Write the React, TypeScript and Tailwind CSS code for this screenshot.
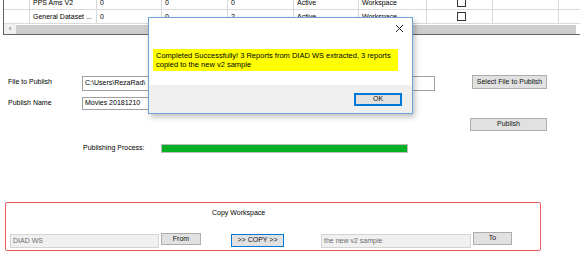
import React from "react";

const font = { fontFamily: '"Liberation Sans", Arial, sans-serif' };

const cols = [26, 67, 65, 66, 66, 65, 68, 66, 66, 60];

function Row({ cells }: { cells: (string | null)[] }) {
  return (
    <div className="flex h-[14px] border-b border-[#d9d9d9]">
      {cols.map((w, i) => (
        <div
          key={i}
          style={{ width: w }}
          className="shrink-0 border-r border-[#d9d9d9] pl-[3px] text-[7px] leading-[14px] text-black overflow-hidden whitespace-nowrap"
        >
          {cells[i] === "CB" ? (
            <div className="flex h-full items-center justify-center">
              <div className="h-[9px] w-[9px] border border-[#333] bg-white" />
            </div>
          ) : (
            cells[i]
          )}
        </div>
      ))}
    </div>
  );
}

function Btn({ children, className = "", focus = false }: { children: React.ReactNode; className?: string; focus?: boolean }) {
  return (
    <div
      className={`flex items-center justify-center bg-[#e1e1e1] text-[7px] font-normal text-[#111] ${
        focus ? "border border-[#0078d7]" : "border border-[#adadad]"
      } ${className}`}
    >
      {children}
    </div>
  );
}

export default function App() {
  return (
    <div style={font} className="relative h-[254px] w-[580px] overflow-hidden bg-white">
      {/* Grid */}
      <div className="ml-[3px] h-[35px] overflow-hidden border-l border-b border-[#646464]">
        <div className="-mt-[4px]">
          <Row cells={["", "PPS Ams V2", "0", "0", "0", "Active", "Workspace", "CB", ""]} />
          <Row cells={["", "General Dataset ...", "0", "0", "2", "Active", "Workspace", "CB", ""]} />
          <div className="flex h-[10px] items-center">
            <div className="flex h-full w-[12px] items-center justify-center bg-[#f0f0f0] text-[8px] leading-none text-[#606060]">
              ‹
            </div>
            <div className="h-[9px] w-[560px] bg-[#cdcdcd]" />
          </div>
        </div>
      </div>

      {/* Form */}
      <div className="mt-[40px] flex items-start">
        <div className="ml-[8px] mt-[3px] w-[74px] text-[7px] leading-[8px] text-black">File to Publish</div>
        <div className="mt-[1px] flex h-[15px] w-[353px] items-center border border-[#a0a0a0] bg-white pl-[2px] text-[7px] text-black">
          C:\Users\RezaRad\
        </div>
        <Btn className="ml-[37px] h-[14px] w-[75px]">Select File to Publish</Btn>
      </div>
      <div className="mt-[6px] flex items-start">
        <div className="ml-[8px] mt-[2px] w-[74px] text-[7px] leading-[8px] text-black">Publish Name</div>
        <div className="flex h-[13px] w-[250px] items-center border border-[#a0a0a0] bg-white pl-[2px] text-[7px] text-black">
          Movies 20181210
        </div>
      </div>
      <div className="mt-[8px] flex">
        <Btn className="ml-[470px] h-[13px] w-[77px]">Publish</Btn>
      </div>
      <div className="mt-[12px] flex items-center">
        <div className="ml-[83px] w-[78px] text-[7px] text-black">Publishing Process:</div>
        <div className="h-[9px] w-[247px] border border-[#bcbcbc] bg-[#06b025]" />
      </div>

      {/* Copy Workspace group */}
      <div className="ml-[5px] mt-[48px] h-[49px] w-[536px] rounded-[2px] border-[1.5px] border-[#ec5b5e]">
        <div className="mt-[5px] pl-[206px] text-[7px] text-black">Copy Workspace</div>
        <div className="mt-[15px] flex items-start">
          <div className="ml-[4px] mt-[1px] flex h-[14px] w-[149px] items-center border border-[#d4d4d4] bg-[#f0f0f0] pl-[2px] text-[7px] text-[#6d6d6d]">
            DIAD WS
          </div>
          <Btn className="ml-[2px] h-[12px] w-[40px]">From</Btn>
          <Btn focus className="ml-[30px] mt-[1px] h-[13px] w-[53px]">&gt;&gt; COPY &gt;&gt;</Btn>
          <div className="ml-[37px] mt-[1px] flex h-[14px] w-[150px] items-center border border-[#d4d4d4] bg-[#f0f0f0] pl-[2px] text-[7px] text-[#6d6d6d]">
            the new v2 sample
          </div>
          <Btn className="ml-[2px] -mt-[1px] h-[13px] w-[39px]">To</Btn>
        </div>
      </div>

      {/* Dialog */}
      <div className="absolute left-[148px] top-[17px] flex h-[97px] w-[265px] flex-col border border-[#6fa3d8] bg-white shadow-[2px_3px_6px_rgba(0,0,0,0.25)]">
        <div className="flex h-[20px] justify-end">
          <svg width="9" height="9" viewBox="0 0 9 9" className="mr-[8px] mt-[6px]">
            <path d="M1 1L8 8M8 1L1 8" stroke="#222" strokeWidth="1" />
          </svg>
        </div>
        <div className="ml-[4px] mt-[11px] w-[245px] bg-[#ffff00] px-[3px] py-[2px] text-[7.5px] leading-[9px] text-black">
          Completed Successfully! 3 Reports from DIAD WS extracted, 3 reports copied to the new v2 sample
        </div>
        <div className="mt-auto flex h-[28px] items-center justify-end bg-[#f0f0f0] pr-[10px]">
          <Btn focus className="h-[13px] w-[48px] border-2">OK</Btn>
        </div>
      </div>
    </div>
  );
}
